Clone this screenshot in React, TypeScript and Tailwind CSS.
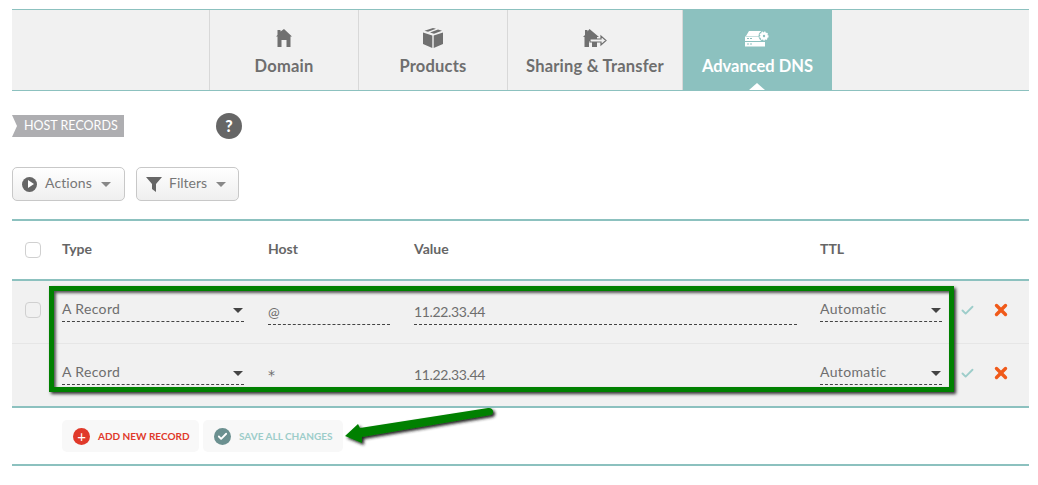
import { Check, X } from 'lucide-react'

const tabs = [
  { label: 'Domain', width: 'w-[149px]', icon: <HomeIcon /> },
  { label: 'Products', width: 'w-[149px]', icon: <BoxIcon /> },
  { label: 'Sharing & Transfer', width: 'w-[175px]', icon: <ShareIcon /> },
]

function HomeIcon() {
  return (
    <svg width="18" height="20" viewBox="0 0 18 20" fill="#707070">
      <path d="M2.500 2h3v1.500L9 1l8 7.500h-1.500V19H11.500v-7h-5v7H2.500V8.500H1l1.500-1.500z" />
    </svg>
  )
}

function BoxIcon() {
  return (
    <svg width="22" height="22" viewBox="0 0 22 22" fill="#707070">
      <path d="M11 1l3 .8-8 3-3.500-1zM16 2.400l4 1.300-8 3-4-1.200zM1 5.500l9.300 3V21L1 17zM21 5.500V17l-9.300 4V8.500z" />
    </svg>
  )
}

function ShareIcon() {
  return (
    <svg width="24" height="20" viewBox="0 0 24 20">
      <path d="M2 2h2.500v1.500L6.500 1 16 9h-2v10H9v-6H6v6H1.500V9H0l2-2z" fill="#707070" />
      <path
        d="M7 11h11V8l5 4.500L18 17v-3H7z"
        fill="#f1f1f1"
        stroke="#707070"
        strokeWidth="1.200"
      />
    </svg>
  )
}

function DnsIcon() {
  return (
    <svg width="25" height="17" viewBox="0 0 25 17">
      <path d="M4 1h12l3 5H1z" fill="#fff" />
      <rect x="0" y="6.500" width="20" height="4.500" fill="#fff" />
      <rect x="0" y="12" width="20" height="4.500" fill="#fff" />
      <path d="M2 8.500h2M5 8.500h2M2 14h2M5 14h2" stroke="#8cc1bf" strokeWidth="1" />
      <circle cx="19" cy="6" r="5.500" fill="#8cc1bf" />
      <circle cx="19" cy="6" r="3.800" fill="#fff" stroke="#fff" strokeWidth="1.500" strokeDasharray="1.500 1" />
      <circle cx="19" cy="6" r="1.200" fill="#8cc1bf" />
    </svg>
  )
}

function Caret({ className }: { className: string }) {
  return <span className={`w-0 h-0 border-x-[5px] border-x-transparent border-t-[5px] ${className}`} />
}

function SelectField({ label, width }: { label: string; width: string }) {
  return (
    <div className={`${width} h-[26px] flex items-start justify-between border-b border-dashed border-[#444] pt-[4px] pr-[1px]`}>
      <span className="text-[14px] leading-[18px] tracking-[0.35px] text-[#6e6e6e]">{label}</span>
      <span className="mt-[8px]">
        <Caret className="block border-t-[#444]" />
      </span>
    </div>
  )
}

function TextField({ value, width, mono }: { value: string; width: string; mono?: boolean }) {
  return (
    <div className={`${width} h-[29px] border-b border-dashed border-[#444] pt-[7px] text-[14px] leading-[18px] tracking-[-0.35px] text-[#6e6e6e] ${mono ? "font-['DejaVu_Sans',sans-serif]" : ''}`}>
      {value}
    </div>
  )
}

function RecordRow({ host, checkbox, border }: { host: string; checkbox: boolean; border: boolean }) {
  return (
    <div className={`${border ? 'h-[63px] border-b border-[#e6e6e6]' : 'h-[62px]'} flex items-start bg-[#f1f1f1] pt-[15px]`}>
      <div className="w-[50px] pl-[13px] pt-[6px]">
        {checkbox && <div className="w-4 h-4 rounded-[4px] border border-[#d0d0d0] bg-[#f1f1f1]" />}
      </div>
      <SelectField label="A Record" width="w-[182px]" />
      <div className="w-[24px]" />
      <TextField value={host} width="w-[122px]" mono={host === '*'} />
      <div className="w-[24px]" />
      <TextField value="11.22.33.44" width="w-[383px]" />
      <div className="w-[23px]" />
      <SelectField label="Automatic" width="w-[122px]" />
      <Check size={15} strokeWidth={3} className="ml-[18px] mt-[7px] text-[#9dcdca]" />
      <X size={18} strokeWidth={4.5} className="ml-[17px] mt-[5px] text-[#f05a1a]" />
    </div>
  )
}

export default function App() {
  return (
    <div className="relative w-[1038px] h-[485px] bg-white overflow-hidden font-['Lato',sans-serif]">
      <div className="w-[1017px] ml-3 mt-[9px]">
        {/* tabs */}
        <div className="h-[82px] flex bg-[#f1f1f1] border-y border-[#8cc1bf]">
          <div className="w-[198px] border-r border-[#d8d8d8]" />
          {tabs.map(tab => (
            <div key={tab.label} className={`${tab.width} shrink-0 flex flex-col items-center border-r border-[#d8d8d8]`}>
              <div className="h-[26px] mt-[15px] flex items-center">{tab.icon}</div>
              <span className="mt-[5px] text-[16.500px] leading-5 tracking-[0.2px] font-bold text-[#6e6e6e]">{tab.label}</span>
            </div>
          ))}
          <div className="relative w-[149px] shrink-0 flex flex-col items-center bg-[#8cc1bf]">
            <div className="h-[26px] mt-[15px] flex items-center"><DnsIcon /></div>
            <span className="mt-[5px] text-[16.500px] leading-5 font-bold text-white">Advanced DNS</span>
            <span className="absolute bottom-0 left-[66px] w-0 h-0 border-x-[8px] border-x-transparent border-b-[7px] border-b-white" />
          </div>
        </div>

        {/* host records title */}
        <div className="mt-[22px] h-[26px] flex items-center">
          <div className="relative w-[112px] h-[22px] flex items-center bg-[#aeaeb1] pl-3 text-[12.500px] text-white">
            <span className="absolute left-0 top-0 w-0 h-0 border-y-[11px] border-y-transparent border-l-[5px] border-l-white" />
            HOST RECORDS
          </div>
          <div className="ml-[92px] w-[26px] h-[26px] rounded-full bg-[#666] flex items-center justify-center text-white text-[16px] font-black">?</div>
        </div>

        {/* actions */}
        <div className="mt-7 flex gap-[11px]">
          <button className="w-[113px] h-[34px] flex items-center pl-[9px] rounded-[5px] border border-[#c8c8c8] bg-gradient-to-b from-white to-[#efefef] text-[14px] text-[#777]">
            <span className="w-[15px] h-[15px] rounded-full bg-[#666] flex items-center justify-center">
              <span className="ml-[2px] w-0 h-0 border-y-[4px] border-y-transparent border-l-[6px] border-l-white" />
            </span>
            <span className="ml-2 pb-[4px] tracking-[0.1px]">Actions</span>
            <Caret className="ml-[9px] border-t-[#888]" />
          </button>
          <button className="w-[103px] h-[34px] flex items-center pl-[9px] rounded-[5px] border border-[#c8c8c8] bg-gradient-to-b from-white to-[#efefef] text-[14px] text-[#777]">
            <svg width="16" height="16" viewBox="0 0 16 16" fill="#666">
              <path d="M0 1h16L10 8v8L6 13V8z" />
            </svg>
            <span className="ml-[7px] pb-[4px]">Filters</span>
            <Caret className="ml-[9px] border-t-[#888]" />
          </button>
        </div>

        {/* table */}
        <div className="mt-[18px] border-t-2 border-[#8cc1bf]">
          <div className="h-[58px] flex items-center text-[14px] font-bold text-[#666]">
            <div className="w-[50px] pl-[13px]">
              <div className="w-4 h-4 rounded-[4px] border border-[#d0d0d0]" />
            </div>
            <div className="w-[206px] pb-[4px]">Type</div>
            <div className="w-[146px] pb-[4px]">Host</div>
            <div className="w-[406px] pb-[4px]">Value</div>
            <div className="pb-[4px]">TTL</div>
          </div>
          <div className="border-y-2 border-[#8cc1bf]">
            <RecordRow host="@" checkbox border />
            <RecordRow host="*" checkbox={false} border={false} />
          </div>
        </div>

        {/* footer */}
        <div className="mt-3 ml-[50px] flex gap-1">
          <button className="w-[137px] h-8 flex items-center pl-[11px] rounded-[5px] bg-[#f8f8f8] text-[10px] font-bold text-[#e0392a]">
            <span className="w-[17px] h-[17px] rounded-full bg-[#e0392a] flex items-center justify-center text-white text-[15px] leading-none font-normal">+</span>
            <span className="ml-2">ADD NEW RECORD</span>
          </button>
          <button className="w-[140px] h-8 flex items-center pl-[11px] rounded-[5px] bg-[#f8f8f8] text-[10px] font-bold text-[#9dcdca]">
            <span className="w-[17px] h-[17px] rounded-full bg-[#6b9090] flex items-center justify-center">
              <Check size={11} strokeWidth={4} className="text-white" />
            </span>
            <span className="ml-2">SAVE ALL CHANGES</span>
          </button>
        </div>
        <div className="mt-3 border-t-2 border-[#8cc1bf]" />
      </div>

      {/* annotation box */}
      <div className="absolute left-[49px] top-[286px] w-[905px] h-[106px] border-[5px] border-[#008000] shadow-[2px_2px_3px_#333,inset_2px_2px_3px_#555]" />

      {/* annotation arrow */}
      <svg className="absolute left-[340px] top-[400px]" width="165" height="50" viewBox="0 0 165 50">
        <defs>
          <filter id="arrowShadow" x="-10%" y="-30%" width="120%" height="160%">
            <feDropShadow dx="2" dy="2" stdDeviation="1.500" floodColor="#222" />
          </filter>
        </defs>
        <path
          d="M5 36L18 24L20 28L148 8C153 7 155 13 151 15L22 37L22 43Z"
          fill="#008000"
          filter="url(#arrowShadow)"
        />
      </svg>
    </div>
  )
}
